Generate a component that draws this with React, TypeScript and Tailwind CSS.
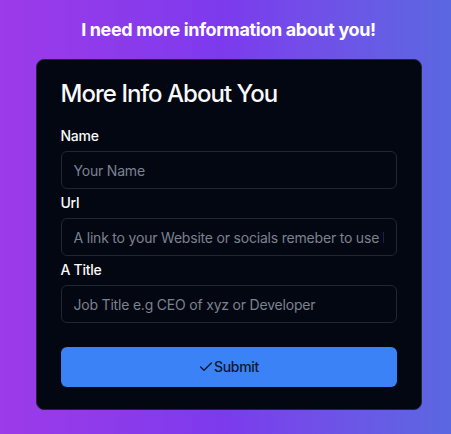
import React from "react";
import { Check } from "lucide-react";

function Field({ label, placeholder, first }: { label: string; placeholder: string; first?: boolean }) {
  return (
    <div className={first ? "flex flex-col" : "mt-1 flex flex-col"}>
      <label className="text-sm font-medium leading-5 tracking-[-0.02em] text-gray-50">{label}</label>
      <input
        placeholder={placeholder}
        className="mt-[5px] h-[38px] w-full rounded-md border border-[#1f2733] bg-transparent px-3 text-sm tracking-[-0.2px] text-gray-50 placeholder:text-[#7b8290] outline-none"
      />
    </div>
  );
}

export default function App() {
  return (
    <div
      className="flex min-h-screen w-full flex-col items-center bg-gradient-to-r from-[#9d3ae9] via-[#7c3aed] to-[#5a67e1] pl-[6px] pt-4 pb-6"
      style={{ fontFamily: "Inter, 'Noto Sans', sans-serif" }}
    >
      <h1 className="text-lg font-bold leading-7 tracking-[-0.02em] text-white">I need more information about you!</h1>
      <div className="mt-[15px] w-[386px] rounded-lg border border-[#1f2733] bg-[#030712] px-6 pt-[18px] pb-[22px]">
        <h2 className="text-2xl font-medium leading-8 tracking-[-0.04em] text-gray-50">More Info About You</h2>
        <div className="mt-4 flex flex-col">
          <Field first label="Name" placeholder="Your Name" />
          <Field label="Url" placeholder="A link to your Website or socials remeber to use https://" />
          <Field label="A Title" placeholder="Job Title e.g CEO of xyz or Developer" />
        </div>
        <button className="mt-6 flex h-10 w-full items-center justify-center rounded-md bg-[#3b82f6] text-sm font-medium tracking-[-0.02em] text-[#0f172a]">
          <Check size={16} strokeWidth={2} />
          <span>Submit</span>
        </button>
      </div>
    </div>
  );
}
